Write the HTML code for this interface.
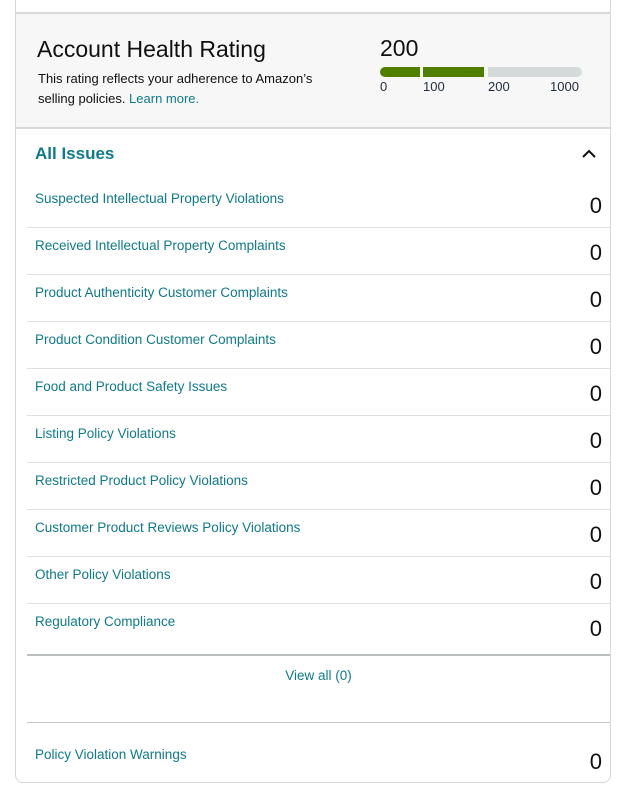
<!DOCTYPE html>
<html><head><meta charset="utf-8"><style>
*{margin:0;padding:0;box-sizing:border-box}
body{width:627px;height:790px;background:#fff;font-family:"Liberation Sans",sans-serif;position:relative;overflow:hidden}
.card{position:absolute;left:15px;top:-10px;width:596px;height:793px;border:1px solid #d5d9d9;border-radius:8px;}
.abs{position:absolute}
.link{color:#0f7a8a;font-size:13.5px}
.row{position:absolute;left:27px;width:583px;height:47px;border-bottom:1px solid #e0e0e0}
.row .t{position:absolute;left:8px;top:10px;color:#0f7a8a;font-size:13.5px}
.row .n{position:absolute;right:8px;top:12px;font-size:22px;color:#0f1111}
</style></head><body>
<div class="card"></div>
<div class="abs" style="left:16px;top:12px;width:594px;height:2px;background:#d5d9d9"></div>
<div class="abs" style="left:16px;top:14px;width:594px;height:113px;background:#f7f7f7"></div>
<div class="abs" style="left:16px;top:127px;width:594px;height:2px;background:#d5d9d9"></div>
<div class="abs" style="left:37px;top:36px;font-size:23px;color:#0f1111">Account Health Rating</div>
<div class="abs" style="left:38px;top:69px;font-size:13px;line-height:20px;color:#0f1111;width:320px">This rating reflects your adherence to Amazon’s<br>selling policies. <span style="color:#0f7a8a">Learn more.</span></div>
<div class="abs" style="left:380px;top:35px;font-size:23px;color:#0f1111">200</div>
<div class="abs" style="left:380px;top:67px;width:40px;height:10px;background:#507f00;border-radius:5px 0 0 5px"></div>
<div class="abs" style="left:423px;top:67px;width:61px;height:10px;background:#507f00"></div>
<div class="abs" style="left:488px;top:67px;width:94px;height:10px;background:#d5dbdb;border-radius:0 5px 5px 0"></div>
<div class="abs" style="left:380px;top:79px;font-size:13px;color:#232f3e">0</div>
<div class="abs" style="left:423px;top:79px;font-size:13px;color:#232f3e">100</div>
<div class="abs" style="left:488px;top:79px;font-size:13px;color:#232f3e">200</div>
<div class="abs" style="left:550px;top:79px;font-size:13px;color:#232f3e">1000</div>
<div class="abs" style="left:35px;top:144px;font-size:17px;font-weight:bold;color:#0f7a8a">All Issues</div>
<svg class="abs" style="left:581px;top:149px" width="16" height="10"><path d="M2 8 L8 2 L14 8" fill="none" stroke="#0f1111" stroke-width="2"/></svg>
<div class="row" style="top:181px"><span class="t">Suspected Intellectual Property Violations</span><span class="n">0</span></div>
<div class="row" style="top:228px"><span class="t">Received Intellectual Property Complaints</span><span class="n">0</span></div>
<div class="row" style="top:275px"><span class="t">Product Authenticity Customer Complaints</span><span class="n">0</span></div>
<div class="row" style="top:322px"><span class="t">Product Condition Customer Complaints</span><span class="n">0</span></div>
<div class="row" style="top:369px"><span class="t">Food and Product Safety Issues</span><span class="n">0</span></div>
<div class="row" style="top:416px"><span class="t">Listing Policy Violations</span><span class="n">0</span></div>
<div class="row" style="top:463px"><span class="t">Restricted Product Policy Violations</span><span class="n">0</span></div>
<div class="row" style="top:510px"><span class="t">Customer Product Reviews Policy Violations</span><span class="n">0</span></div>
<div class="row" style="top:557px"><span class="t">Other Policy Violations</span><span class="n">0</span></div>
<div class="row" style="top:604px;height:52px;border-bottom:2px solid #bbbfbf"><span class="t">Regulatory Compliance</span><span class="n">0</span></div>
<div class="abs link" style="left:0;width:637px;text-align:center;top:668px">View all (0)</div>
<div class="abs" style="left:27px;top:722px;width:583px;height:1px;background:#c4c7c7"></div>
<div class="abs link" style="left:35px;top:747px">Policy Violation Warnings</div>
<div class="abs" style="right:25px;top:749px;font-size:22px;color:#0f1111">0</div>
</body></html>
